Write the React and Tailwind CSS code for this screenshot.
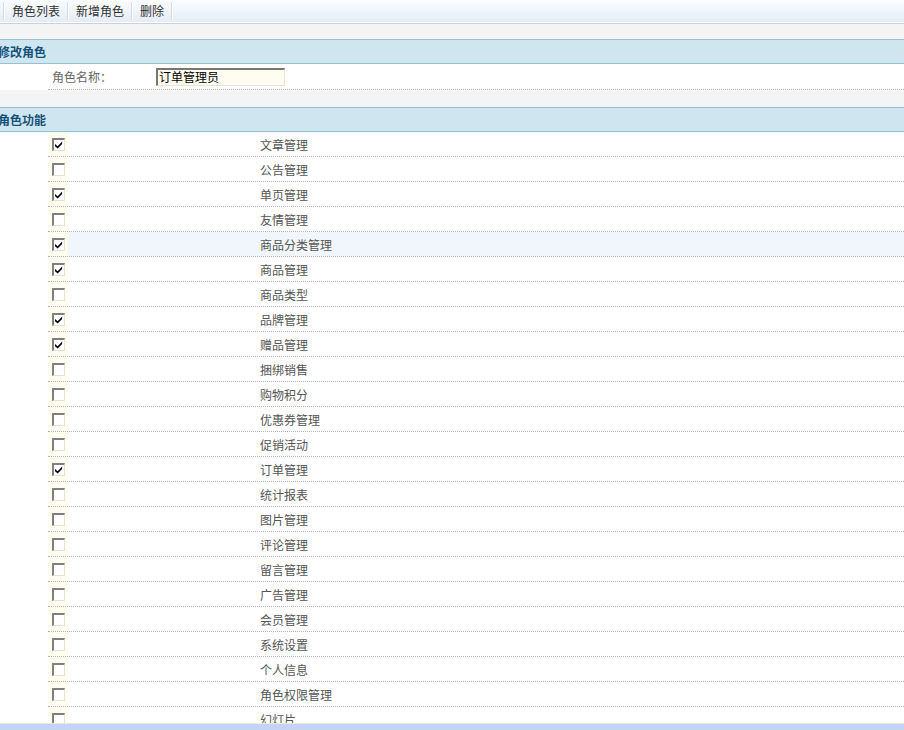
import React from 'react';

const items = [
  ['文章管理', true],
  ['公告管理', false],
  ['单页管理', true],
  ['友情管理', false],
  ['商品分类管理', true],
  ['商品管理', true],
  ['商品类型', false],
  ['品牌管理', true],
  ['赠品管理', true],
  ['捆绑销售', false],
  ['购物积分', false],
  ['优惠券管理', false],
  ['促销活动', false],
  ['订单管理', true],
  ['统计报表', false],
  ['图片管理', false],
  ['评论管理', false],
  ['留言管理', false],
  ['广告管理', false],
  ['会员管理', false],
  ['系统设置', false],
  ['个人信息', false],
  ['角色权限管理', false],
  ['幻灯片', false],
];

const font = { fontFamily: '"Noto Sans CJK SC", "Noto Sans", sans-serif' };

function Checkbox({ checked }) {
  return (
    <span className="relative block h-[13px] w-[13px] border-t-2 border-l-2 border-r border-b border-t-[#808080] border-l-[#808080] border-r-[#e4e2d8] border-b-[#e4e2d8] bg-white">
      {checked && (
        <svg viewBox="0 0 9 9" className="absolute left-[1px] top-[1px] h-[8px] w-[8px]">
          <path d="M0 3.5 L3 6 L8 0.5 L8 3.5 L3 8.5 L0 6 Z" fill="#000" />
        </svg>
      )}
    </span>
  );
}

function Sep() {
  return <span className="h-[18px] w-[2px] border-l border-[#d4dbe3] bg-white" />;
}

function Header({ title }) {
  return (
    <div className="flex h-[25px] items-center border-t border-b border-[#96bfd4] bg-[#cfe6f0]">
      <span className="-ml-[2px] text-[12px] font-bold text-[#14507a]">{title}</span>
    </div>
  );
}

export default function App() {
  return (
    <div className="relative h-[730px] w-[904px] overflow-hidden bg-white text-[12px] text-[#555]" style={font}>
      {/* toolbar */}
      <div className="flex h-[22px] items-center bg-gradient-to-b from-[#fbfdff] to-[#e4ecf5] pl-[3px]">
        <Sep />
        <span className="px-[7px] text-[#333]">角色列表</span>
        <Sep />
        <span className="px-[7px] text-[#333]">新增角色</span>
        <Sep />
        <span className="px-[7px] text-[#333]">删除</span>
        <Sep />
      </div>
      <div className="h-px bg-white" />
      <div className="h-[16px] border-t border-[#c8d2de] bg-[#f4f4f4]" />

      <Header title="修改角色" />
      <div className="ml-[48px] flex h-[26px] items-center border-b border-dotted border-[#b4b4b4]">
        <span className="ml-[4px] w-[104px] text-[#666]">角色名称：</span>
        <div className="flex h-[18px] w-[129px] items-center border-t-2 border-l-2 border-r border-b border-t-[#777] border-l-[#777] border-r-[#e8e4d4] border-b-[#e8e4d4] bg-[#fffdf0] pl-[1px] text-[12px] text-black">
          订单管理员
        </div>
      </div>
      <div className="h-[17px] bg-[#f4f4f4]" />

      <Header title="角色功能" />
      <div>
        {items.map(([name, checked], i) => (
          <div
            key={name}
            className={`ml-[48px] flex h-[25px] items-center border-b border-dotted border-[#b4b4b4] ${i === 4 ? 'bg-[#f0f6fb]' : ''}`}
          >
            <div className="flex h-full w-[20px] items-center justify-center bg-[#fffdf0]">
              <Checkbox checked={checked} />
            </div>
            <span className="ml-[192px] pt-px text-[#555]">{name}</span>
          </div>
        ))}
      </div>

      {/* bottom frame strip */}
      <div className="absolute bottom-0 left-0 right-0 h-[7px] border-t border-[#ece9d8] bg-[#c4d4f8]" />
    </div>
  );
}
